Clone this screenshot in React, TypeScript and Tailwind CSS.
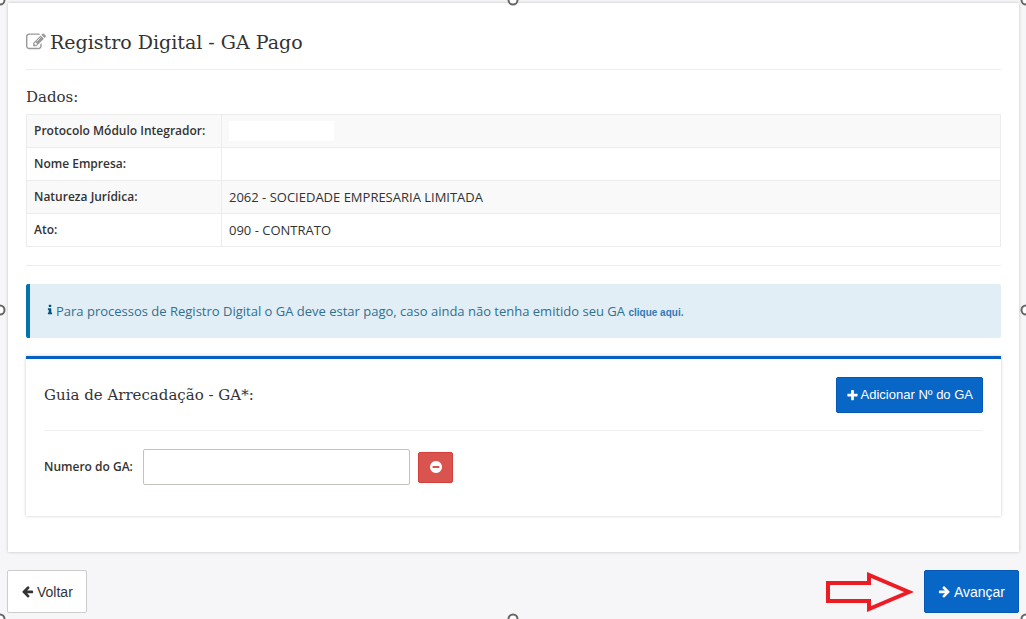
type IconProps = { path: string; className: string; viewBox?: string };

const Icon = ({ path, className, viewBox = "0 0 1792 1792" }: IconProps) => (
  <svg viewBox={viewBox} fill="currentColor" aria-hidden="true" className={className}>
    <path d={path} />
  </svg>
);

const icons = {
  edit: "M888 1184l116-116-152-152-116 116v56h96v96h56zm440-720q-16-16-33 1l-350 350q-17 17-1 33t33-1l350-350q17-17 1-33zm80 594v190q0 119-84.5 203.5t-203.5 84.5h-832q-119 0-203.5-84.5t-84.5-203.5v-832q0-119 84.5-203.5t203.5-84.5h832q63 0 117 25 15 7 18 23 3 17-9 29l-49 49q-14 14-32 8-23-6-45-6h-832q-66 0-113 47t-47 113v832q0 66 47 113t113 47h832q66 0 113-47t47-113v-126q0-13 9-22l64-64q15-15 35-7t20 29zm-96-738l288 288-672 672h-288v-288zm444 132l-92 92-288-288 92-92q28-28 68-28t68 28l152 152q28 28 28 68t-28 68z",
  info: "M1216 1344v128q0 26-19 45t-45 19h-512q-26 0-45-19t-19-45v-128q0-26 19-45t45-19h64v-384h-64q-26 0-45-19t-19-45v-128q0-26 19-45t45-19h384q26 0 45 19t19 45v576h64q26 0 45 19t19 45zm-128-1152v192q0 26-19 45t-45 19h-256q-26 0-45-19t-19-45v-192q0-26 19-45t45-19h256q26 0 45 19t19 45z",
  plus: "M1600 736v192q0 40-28 68t-68 28h-416v416q0 40-28 68t-68 28h-192q-40 0-68-28t-28-68v-416h-416q-40 0-68-28t-28-68v-192q0-40 28-68t68-28h416v-416q0-40 28-68t68-28h192q40 0 68 28t28 68v416h416q40 0 68 28t28 68z",
  minusCircle: "M1344 960v-128q0-26-19-45t-45-19h-768q-26 0-45 19t-19 45v128q0 26 19 45t45 19h768q26 0 45-19t19-45zm320-64q0 209-103 385.5t-279.5 279.5-385.5 103-385.5-103-279.5-279.5-103-385.5 103-385.5 279.5-279.5 385.5-103 385.5 103 279.5 279.5 103 385.5z",
  arrowLeft: "M1664 896v128q0 53-32.5 90.5t-84.5 37.5h-704l293 294q38 36 38 90t-38 90l-75 76q-37 37-90 37-52 0-91-37l-651-652q-37-37-37-90 0-52 37-91l651-650q38-38 91-38 52 0 90 38l75 74q38 38 38 91t-38 91l-293 293h704q52 0 84.5 37.5t32.5 90.5z",
  arrowRight: "M1600 960q0 54-37 91l-651 651q-39 37-91 37-51 0-90-37l-75-75q-38-38-38-91t38-91l293-293h-704q-52 0-84.5-37.5t-32.5-90.5v-128q0-53 32.5-90.5t84.5-37.5h704l-293-294q-38-36-38-90t38-90l75-75q38-38 90-38 53 0 91 38l651 651q37 35 37 90z",
};

const rows = [
  { label: "Protocolo Módulo Integrador:", value: "", masked: true },
  { label: "Nome Empresa:", value: "" },
  { label: "Natureza Jurídica:", value: "2062 - SOCIEDADE EMPRESARIA LIMITADA" },
  { label: "Ato:", value: "090 - CONTRATO" },
];

// Resize handles that sit on the outer edge of the frame
const handles = [
  "left-0 top-0 -translate-x-1/2 -translate-y-1/2",
  "left-1/2 top-0 -translate-x-1/2 -translate-y-1/2",
  "right-0 top-0 translate-x-1/2 -translate-y-1/2",
  "left-0 top-1/2 -translate-x-1/2 -translate-y-1/2",
  "right-0 top-1/2 translate-x-1/2 -translate-y-1/2",
  "left-0 bottom-0 -translate-x-1/2 translate-y-1/2",
  "left-1/2 bottom-0 -translate-x-1/2 translate-y-1/2",
  "right-0 bottom-0 translate-x-1/2 translate-y-1/2",
];

const DataTable = () => (
  <table className="w-full border-collapse border border-[#ececec] text-[13px] leading-5">
    <tbody>
      {rows.map((row) => (
        <tr key={row.label} className="h-[33px] border-b border-[#ececec] odd:bg-[#f9f9f9]">
          <th scope="row" className="w-[195px] border-r border-[#ececec] px-[7px] text-left text-xs font-semibold whitespace-nowrap">
            {row.label}
          </th>
          <td className="px-[7px]">
            {row.masked ? <div className="h-5 w-[105px] bg-white" /> : row.value}
          </td>
        </tr>
      ))}
    </tbody>
  </table>
);

const GuiaPanel = () => (
  <section className="mt-[18px] border-t-3 border-[#0560c2] bg-white px-[18px] pt-[18px] pb-[31px] shadow-[0_0_3px_rgba(0,0,0,0.22)]">
    <div className="flex items-center justify-between border-b border-[#f0f0f0] pb-[17px]">
      <h3 className="font-['DejaVu_Serif',serif] text-[15px] leading-6">Guia de Arrecadação - GA*:</h3>
      <button type="button" className="flex h-9 items-center gap-[2px] rounded-xs border border-[#0558b3] bg-[#0866c6] px-[9px] font-['Liberation_Sans',sans-serif] text-[13px] text-white">
        <Icon path={icons.plus} className="size-[13px]" />
        Adicionar Nº do GA
      </button>
    </div>
    <div className="mt-[18px] flex items-center">
      <label htmlFor="numero-ga" className="w-[99px] text-xs font-semibold">
        Numero do GA:
      </label>
      <input id="numero-ga" type="text" className="h-9 w-[267px] rounded-xs border border-[#c3c3bb] bg-white px-2 text-[13px]" />
      <button type="button" aria-label="Remover" className="ml-2 flex h-[31px] w-[35px] items-center justify-center rounded-xs border border-[#d43f3a] bg-[#d9534f] text-white">
        <Icon path={icons.minusCircle} className="size-[14px]" />
      </button>
    </div>
  </section>
);

const App = () => {
  return (
    <div className="relative min-h-screen overflow-hidden bg-[#f6f6f9] px-[7px] pt-[3px] pb-[5px] font-['Open_Sans',sans-serif] text-[#333]">
      <main className="ml-px bg-white px-[18px] pt-[25px] pb-9 shadow-[0_0_3px_rgba(0,0,0,0.22)]">
        <h1 className="flex items-center gap-1 border-b border-[#ececec] pb-[13px] font-['DejaVu_Serif',serif] text-[19px] leading-7">
          <Icon path={icons.edit} className="size-5 text-[#999]" />
          Registro Digital - GA Pago
        </h1>
        <h2 className="mt-[15px] mb-[5px] font-['DejaVu_Serif',serif] text-[15px] leading-6">Dados:</h2>
        <DataTable />
        <hr className="my-[18px] border-[#ececec]" />
        <div className="rounded-xs border-l-4 border-[#0571ad] bg-[#e1eef6] px-[14px] py-[17px] text-[13px] leading-5 text-[#31708f]">
          <Icon path={icons.info} className="inline size-[12px] align-baseline text-[#005580]" />
          Para processos de Registro Digital o GA deve estar pago, caso ainda não tenha emitido seu GA{" "}
          <a href="#emitir" className="font-['Liberation_Sans',sans-serif] text-[10px] leading-none font-bold text-[#337ab7]">
            clique aqui.
          </a>
        </div>
        <GuiaPanel />
      </main>

      <footer className="mt-[18px] flex items-center font-['Liberation_Sans',sans-serif] text-sm">
        <button type="button" className="flex h-[43px] items-center gap-[3px] rounded-xs border border-[#ccc] bg-white px-[13px]">
          <Icon path={icons.arrowLeft} className="size-[13px]" />
          Voltar
        </button>
        <svg viewBox="0 0 88 40" aria-hidden="true" className="mr-[10px] ml-auto h-10 w-[88px]">
          <path d="M2 11H43V3L83 20L43 37V29H2Z" fill="none" stroke="#ed1c24" strokeWidth="4" />
        </svg>
        <button type="button" className="flex h-[43px] items-center gap-[3px] rounded-xs border border-[#0558b3] bg-[#0866c6] px-[13px] text-white">
          <Icon path={icons.arrowRight} className="size-[13px]" />
          Avançar
        </button>
      </footer>

      {handles.map((place) => (
        <span key={place} className={`absolute size-[11px] rounded-full border-2 border-[#666] bg-white ${place}`} />
      ))}
    </div>
  );
};

export default App;
